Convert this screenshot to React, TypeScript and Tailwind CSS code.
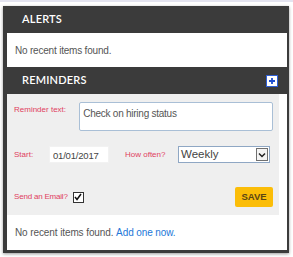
import { useState } from "react";

const RemindersPanel: React.FC = () => {
  const [note, setNote] = useState("Check on hiring status");
  const [sendEmail, setSendEmail] = useState(true);

  return (
    <div className="min-h-screen bg-white pt-[4px] pl-[3px] font-['Liberation_Sans',Arial,sans-serif] border-t-[2px] border-[#e4e4f0]">
      <div className="w-[286px] h-[247px] bg-[#3b3b3b] pl-[4px] pr-[2px] pb-[3px] flex flex-col shadow-[0_1px_3px_rgba(0,0,0,0.4)]">
        {/* Alerts */}
        <div className="h-[27px] flex items-center pl-[15px] text-white text-[11px] font-['Lato',sans-serif] font-semibold tracking-[0.2px]">
          ALERTS
        </div>
        <div className="h-[34px] bg-white flex items-center pl-[8px] text-[10px] text-[#555] tracking-[-0.2px]">
          No recent items found.
        </div>

        {/* Reminders */}
        <div className="h-[27px] flex items-center justify-between pl-[15px] pr-[9px] text-white text-[11px] font-['Lato',sans-serif] font-semibold tracking-[0.2px]">
          <span>REMINDERS</span>
          <button className="w-[12px] h-[12px] bg-white border border-[#2f5fd6] flex items-center justify-center">
            <svg width="8" height="8" viewBox="0 0 8 8">
              <path d="M4 1v6M1 4h6" stroke="#1f4fd0" strokeWidth="1.8" />
            </svg>
          </button>
        </div>

        <div className="flex-1 bg-white flex flex-col">
          <div className="h-[121px] bg-[#efefef] mr-[8px] pl-[7px] pr-[6px] pt-[8px] flex flex-col">
            <div className="flex">
              <label className="w-[66px] pt-[2px] text-[8px] text-[#e0405e]">
                Reminder text:
              </label>
              <textarea
                value={note}
                onChange={(e) => setNote(e.target.value)}
                className="w-[196px] h-[29px] resize-none bg-white border border-[#a9bfd6] rounded-[2px] px-[3px] pt-[3px] text-[10px] text-[#555] outline-none tracking-[-0.25px]"
              />
            </div>

            <div className="flex items-center mt-[15px] h-[17px]">
              <label className="w-[35px] text-[8px] text-[#e0405e]">Start:</label>
              <input
                defaultValue="01/01/2017"
                className="w-[60px] h-[17px] bg-white border border-[#f2f2f2] px-[3px] pt-[1px] text-[9.5px] text-[#444] outline-none tracking-[-0.2px]"
              />
              <label className="w-[53px] ml-[16px] text-[8px] text-[#e0405e] whitespace-nowrap">
                How often?
              </label>
              <div className="w-[92px] h-[17px] bg-white border border-[#8fa7c4] flex items-center justify-between pl-[2px] pr-[1px]">
                <span className="text-[11.5px] text-[#444]">Weekly</span>
                <span className="w-[12px] h-[13px] border border-[#707070] bg-[#f4f4f4] flex items-center justify-center">
                  <svg width="8" height="6" viewBox="0 0 8 6">
                    <path d="M1 1.5l3 3 3-3" stroke="#222" strokeWidth="1.5" fill="none" />
                  </svg>
                </span>
              </div>
            </div>

            <div className="flex items-center justify-between mt-[24px]">
              <div className="flex items-center gap-[5px]">
                <label className="text-[8px] text-[#e0405e] whitespace-nowrap tracking-[-0.2px]">
                  Send an Email?
                </label>
                <button
                  onClick={() => setSendEmail(!sendEmail)}
                  className="w-[11px] h-[11px] bg-white border border-[#333] flex items-center justify-center"
                >
                  {sendEmail && (
                    <svg width="8" height="8" viewBox="0 0 8 8">
                      <path d="M1 4l2 2.5L7 1" stroke="#111" strokeWidth="1.5" fill="none" />
                    </svg>
                  )}
                </button>
              </div>
              <button className="w-[38px] h-[20px] bg-[#fbbd08] rounded-[2px] text-[9.5px] font-bold text-[#5a4515]">
                SAVE
              </button>
            </div>
          </div>

          <div className="flex-1 flex items-center pl-[8px] text-[10px] text-[#555] tracking-[-0.1px]">
            No recent items found.&nbsp;
            <a href="#" className="text-[#2277d8]">Add one now.</a>
          </div>
        </div>
      </div>
    </div>
  );
};

export default function App() {
  return <RemindersPanel />;
}
